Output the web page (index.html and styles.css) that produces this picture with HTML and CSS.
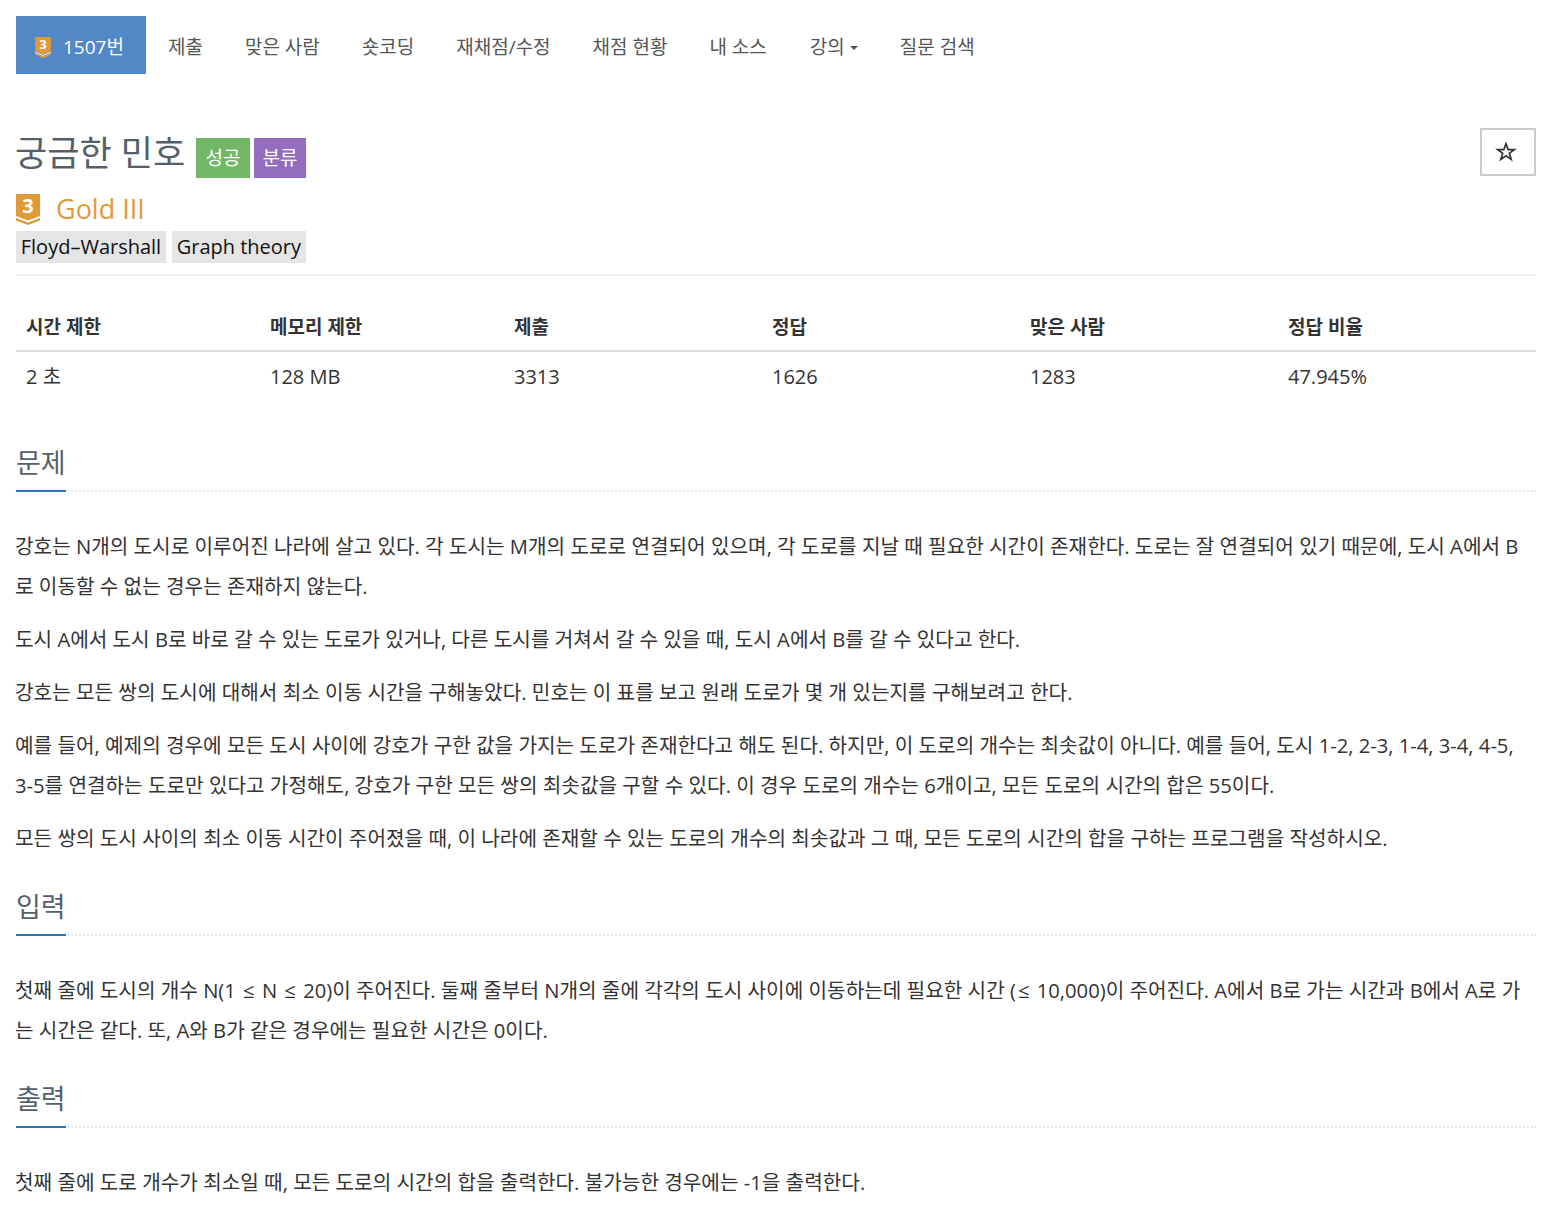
FILE: index.html
```html
<!DOCTYPE html>
<html lang="ko">
<head>
    <meta charset="UTF-8">
    <meta name="viewport" content="width=device-width, initial-scale=1.0">
    <title>1507번: 궁금한 민호</title>
    <link rel="stylesheet" href="styles.css">
</head>
<body>
    <nav class="problem-menu">
        <ul>
            <li class="active">
                <a href="#">
                    <svg class="tier-icon-small" viewBox="0 0 24 32" aria-hidden="true">
                        <path d="M0 0H24V22L12 26.5L0 22Z" fill="#e29a39"/>
                        <path d="M0 23.5L12 28L24 23.5" fill="none" stroke="#fff" stroke-width="1.5"/>
                        <path d="M0 25L12 29.5L24 25V27L12 32L0 27Z" fill="#e29a39"/>
                        <text x="12" y="19" text-anchor="middle" class="tier-digit">3</text>
                    </svg>
                    1507번
                </a>
            </li>
            <li><a href="#">제출</a></li>
            <li><a href="#">맞은 사람</a></li>
            <li><a href="#">숏코딩</a></li>
            <li><a href="#">재채점/수정</a></li>
            <li><a href="#">채점 현황</a></li>
            <li class="before-lecture"><a href="#">내 소스</a></li>
            <li><a href="#">강의<span class="caret"></span></a></li>
            <li><a href="#">질문 검색</a></li>
        </ul>
    </nav>

    <main>
        <div class="problem-head">
            <h1 class="problem-title">궁금한 민호</h1>
            <span class="label label-success">성공</span>
            <span class="label label-purple">분류</span>
            <button class="star-btn" aria-label="즐겨찾기">
                <svg viewBox="0 0 20 20" aria-hidden="true">
                    <path d="M10 1.8L12.1 7.6H18.3L13.3 11.3L15.2 17.4L10 13.7L4.8 17.4L6.7 11.3L1.7 7.6H7.9Z" fill="none" stroke="#333" stroke-width="1.7"/>
                </svg>
            </button>
        </div>

        <div class="tier-line">
            <svg class="tier-icon" viewBox="0 0 24 32" aria-hidden="true">
                <path d="M0 0H24V22L12 26.5L0 22Z" fill="#e29a39"/>
                <path d="M0 24L12 28.5L24 24V26.5L12 31L0 26.5Z" fill="#e29a39"/>
                <text x="12" y="19" text-anchor="middle" class="tier-digit">3</text>
            </svg>
            <span class="tier-name">Gold III</span>
        </div>

        <div class="tags">
            <span class="tag">Floyd–Warshall</span>
            <span class="tag">Graph theory</span>
        </div>

        <table class="info-table">
            <thead>
                <tr>
                    <th class="col-narrow">시간 제한</th>
                    <th class="col-narrow">메모리 제한</th>
                    <th class="col-wide">제출</th>
                    <th class="col-wide">정답</th>
                    <th class="col-wide">맞은 사람</th>
                    <th class="col-wide">정답 비율</th>
                </tr>
            </thead>
            <tbody>
                <tr>
                    <td>2 초</td>
                    <td>128 MB</td>
                    <td>3313</td>
                    <td>1626</td>
                    <td>1283</td>
                    <td>47.945%</td>
                </tr>
            </tbody>
        </table>

        <section class="problem-section section-first">
            <div class="headline"><h2>문제</h2></div>
            <p>강호는 N개의 도시로 이루어진 나라에 살고 있다. 각 도시는 M개의 도로로 연결되어 있으며, 각 도로를 지날 때 필요한 시간이 존재한다. 도로는 잘 연결되어 있기 때문에, 도시 A에서 B로 이동할 수 없는 경우는 존재하지 않는다.</p>
            <p>도시 A에서 도시 B로 바로 갈 수 있는 도로가 있거나, 다른 도시를 거쳐서 갈 수 있을 때, 도시 A에서 B를 갈 수 있다고 한다.</p>
            <p>강호는 모든 쌍의 도시에 대해서 최소 이동 시간을 구해놓았다. 민호는 이 표를 보고 원래 도로가 몇 개 있는지를 구해보려고 한다.</p>
            <p>예를 들어, 예제의 경우에 모든 도시 사이에 강호가 구한 값을 가지는 도로가 존재한다고 해도 된다. 하지만, 이 도로의 개수는 최솟값이 아니다. 예를 들어, 도시 1-2, 2-3, 1-4, 3-4, 4-5, 3-5를 연결하는 도로만 있다고 가정해도, 강호가 구한 모든 쌍의 최솟값을 구할 수 있다. 이 경우 도로의 개수는 6개이고, 모든 도로의 시간의 합은 55이다.</p>
            <p>모든 쌍의 도시 사이의 최소 이동 시간이 주어졌을 때, 이 나라에 존재할 수 있는 도로의 개수의 최솟값과 그 때, 모든 도로의 시간의 합을 구하는 프로그램을 작성하시오.</p>
        </section>

        <section class="problem-section">
            <div class="headline"><h2>입력</h2></div>
            <p>첫째 줄에 도시의 개수 N(1 &hairsp;≤&hairsp; N &hairsp;≤&hairsp; 20)이 주어진다. 둘째 줄부터 N개의 줄에 각각의 도시 사이에 이동하는데 필요한 시간 (&hairsp;≤&hairsp; 10,000)이 주어진다. A에서 B로 가는 시간과 B에서 A로 가는 시간은 같다. 또, A와 B가 같은 경우에는 필요한 시간은 0이다.</p>
        </section>

        <section class="problem-section">
            <div class="headline"><h2>출력</h2></div>
            <p>첫째 줄에 도로 개수가 최소일 때, 모든 도로의 시간의 합을 출력한다. 불가능한 경우에는 -1을 출력한다.</p>
        </section>
    </main>
</body>
</html>
```

FILE: styles.css
```css
* {
    box-sizing: border-box;
}

body {
    margin: 0;
    padding: 16px 20px 0 16px;
    background: #fff;
    color: #333;
    font-family: "Open Sans", "Noto Sans CJK KR", sans-serif;
    font-size: 20px;
    line-height: 1.42857;
}

a {
    color: inherit;
    text-decoration: none;
}

svg {
    overflow: visible;
}

/* Top menu */
.problem-menu ul {
    display: flex;
    margin: 0;
    padding: 0;
    list-style: none;
    font-size: 19px;
}

.problem-menu a {
    display: flex;
    align-items: center;
    height: 58px;
    padding: 5px 21px 0;
    color: #555;
}

.problem-menu .active {
    margin-right: 1px;
}

.problem-menu .active a {
    padding: 5px 22px 0 19px;
    background: #5288c6;
    color: #fff;
}

.problem-menu .before-lecture a {
    padding-right: 22px;
}

.tier-icon-small {
    width: 16px;
    height: 21px;
    margin-right: 12px;
}

.tier-digit {
    fill: #fff;
    font-family: "Open Sans", sans-serif;
    font-size: 20px;
    font-weight: 700;
}

.caret {
    display: inline-block;
    margin-left: 5px;
    border-top: 4px solid #555;
    border-left: 4px solid transparent;
    border-right: 4px solid transparent;
}

/* Title */
.problem-head {
    display: flex;
    align-items: center;
    gap: 4px;
    height: 50px;
    margin-top: 53px;
}

.problem-title {
    margin: 2px 7px 0 -1px;
    color: #555f6b;
    font-size: 35px;
    font-weight: 400;
    line-height: 50px;
}

.label {
    display: flex;
    align-items: center;
    justify-content: center;
    height: 40px;
    margin-top: 11px;
    padding-top: 3px;
    color: #fff;
    font-size: 19px;
}

.label-success {
    padding-left: 9.5px;
    padding-right: 9.5px;
    background: #72b766;
}

.label-purple {
    padding-left: 8.5px;
    padding-right: 8.5px;
    background: #946dc1;
}

.star-btn {
    display: flex;
    align-items: center;
    justify-content: center;
    width: 56px;
    height: 48px;
    margin-left: auto;
    padding: 0 4px 0 0;
    background: #fff;
    border: 2px solid #ccc;
}

.star-btn svg {
    width: 20px;
    height: 20px;
}

.tier-line {
    display: flex;
    align-items: center;
    gap: 16px;
    height: 34px;
    margin-top: 15px;
}

.tier-icon {
    width: 24px;
    height: 32px;
    margin-top: 2px;
}

.tier-name {
    color: #e29a39;
    font-size: 27px;
}

.tags {
    display: flex;
    gap: 6px;
    padding-bottom: 11px;
    border-bottom: 2px solid #eee;
    margin-top: 5px;
}

.tag {
    height: 32px;
    padding: 0 4.75px;
    background: #e5e5e5;
    color: #111;
    font-size: 20px;
    line-height: 32px;
}

/* Info table */
.info-table {
    width: 100%;
    margin-top: 28px;
    border-collapse: collapse;
    table-layout: fixed;
}

.info-table th,
.info-table td {
    padding: 2px 10px 0;
    text-align: left;
}

.info-table th {
    height: 47px;
    border-bottom: 2px solid #ddd;
    font-size: 19px;
    font-weight: 700;
}

.info-table td {
    height: 50px;
}

.col-narrow {
    width: 244px;
}

/* Problem sections */
.problem-section {
    margin-top: 27.75px;
}

.section-first {
    margin-top: 41px;
}

.headline {
    border-bottom: 2px dotted #e4e9ef;
}

.headline h2 {
    display: inline-block;
    margin: 0 0 -2px;
    padding-bottom: 6px;
    border-bottom: 2px solid #2f74b9;
    color: #555f6b;
    font-size: 27px;
    font-weight: 400;
    line-height: 42px;
}

.problem-section p {
    margin: 0 0 13px -1px;
    font-size: 20.2px;
    line-height: 40px;
}

.headline + p {
    margin-top: 34px;
}
```
